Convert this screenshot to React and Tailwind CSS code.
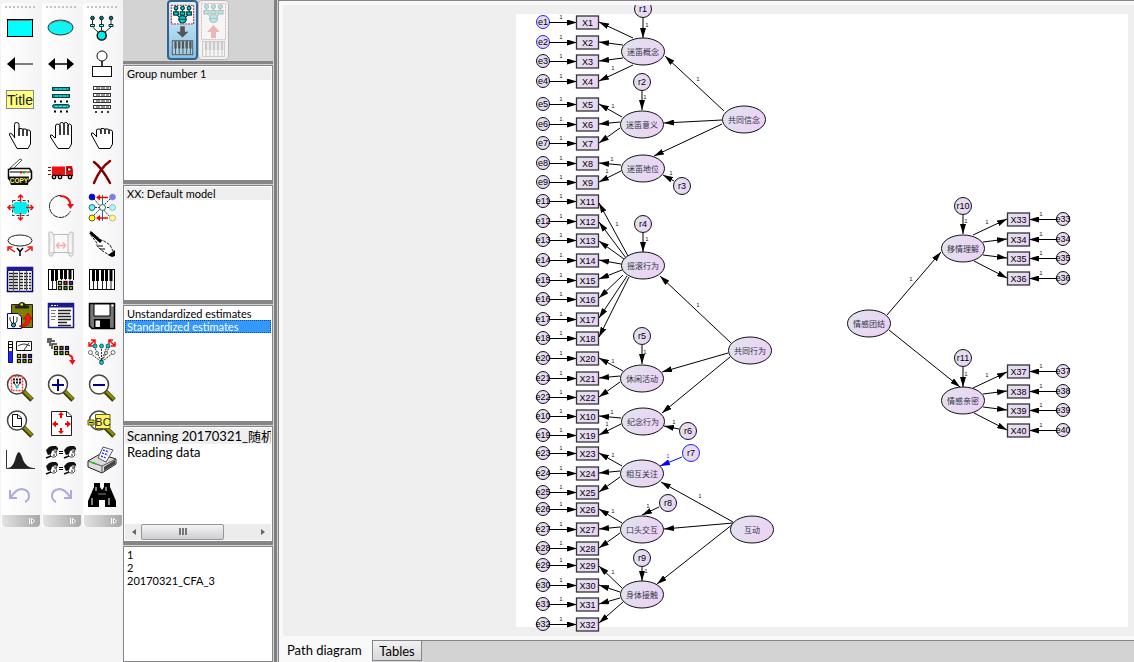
import {useState} from 'react';

const red = '#e11';

// one list per toolbar column, top to bottom, drawn on a 36x36 grid
const columnOne = [
    { name: 'Draw observed variable', art: <><rect x="5.5" y="9.5" width="25" height="17" fill="#0ff" stroke="#000" /><path d="M6 10.5H29" stroke="#777" /></> },
    { name: 'Draw path', art: <><path d="M5 18L13 11V25Z" /><path d="M12 18H31" stroke="#000" /></> },
    { name: 'Figure caption', art: <><rect x="4.5" y="8.5" width="27" height="18" fill="#ffff80" stroke="#888" /><text x="18" y="23" fontSize="14" textAnchor="middle" fontFamily="Liberation Sans, sans-serif" fill="#222">Title</text></> },
    { name: 'Select one object', art: <path d="M13 20L10 16Q7 14 7.500 17L12 25L15 30.500H26L28.500 26V14Q28.500 12 26.500 12H25V18V12Q25 11 23 11H21V18V12Q21 10.500 19 10.500H17V18V6.500Q17 4.500 14.500 4.500Q12.500 4.500 12.500 6.500V20" fill="#fff" stroke="#000" /> },
    { name: 'Duplicate objects', art: <><path d="M8 14L18 5L20 6L11 15" fill="#fff" stroke="#555" /><path d="M6.500 15.500L9.500 14.500H27.500L29.500 17.500V24.500L26.500 27.500H9.500L6.500 24.500Z" fill="#fff" stroke="#000" strokeWidth="1.500" /><path d="M8 18H29" stroke="#000" /><path d="M18 18.500H20" stroke="red" strokeWidth="2" /><path d="M21 18.500H23" stroke="#0b0" strokeWidth="2" /><path d="M24 18.500H26" stroke="#e90" strokeWidth="2" /><path d="M6 22.500H27L26 31H9Z" fill="#111" /><text x="17" y="29" fontSize="6.500" fontWeight="bold" textAnchor="middle" fontFamily="Liberation Sans, sans-serif" fill="#fff45a">COPY</text></> },
    { name: 'Change shape', art: <><path d="M10.500 10.500H26.500V25.500H10.500Z" fill="none" stroke="#333" strokeDasharray="3 2" /><path d="M13 12H24L28 17.500L24 24H13L9 17.500Z" fill="#0ee" /><g stroke={red} strokeWidth="1.500" fill="none"><path d="M18.500 5V12M16 7.500L18.500 5L21 7.500M18.500 23V30M16 27.500L18.500 30L21 27.500M6 17.500H13M8.500 15L6 17.500L8.500 20M24 17.500H31M28.500 15L31 17.500L28.500 20" /></g></> },
    { name: 'Move parameter values', art: <><ellipse cx="18" cy="14.500" rx="12" ry="5.500" fill="#fff" stroke="#222" /><path d="M15 22L18 25.500L21 22M18 25.500V30" fill="none" stroke="#000" strokeWidth="1.500" /><path d="M13 26L7 22M6 25V21H10.500M23 26L29 22M25.500 21H30V25" fill="none" stroke={red} strokeWidth="1.500" /></> },
    { name: 'Data files', art: <><rect x="5.500" y="5.500" width="25" height="24" fill="#fff" stroke="#000070" strokeWidth="1.500" /><rect x="5" y="5" width="26" height="4" fill="#1a1a9a" /><path d="M7 11.500H29M7 14.500H29M7 17.500H29M7 20.500H29M7 23.500H29M7 26.500H29" stroke="#222" strokeWidth="1.500" strokeDasharray="4 1" /><path d="M11.500 9V30M17.500 9V30M24.500 9V30" stroke="#555" /></> },
    { name: 'Copy to clipboard', art: <><path d="M9.500 6.500H30.500V29.500H9.500Z" fill="#808000" stroke="#222" /><path d="M13 10.500V7.500H16Q17 4 20 4T24 7.500H27V10.500Z" fill="#222" /><path d="M18.500 6.500H21" stroke="#ff0" strokeWidth="2" /><path d="M5.500 15.500H16L19.500 19V30.500H5.500Z" fill="#fff" stroke="#000080" /><path d="M8 19V22L11 27M11.500 18V26M15 19V23L12 27" fill="none" stroke="#333" /><circle cx="11.500" cy="27" r="2" fill="#0cc" stroke="#000" /><path d="M17 28Q24 27 24 21H21L26 15L30 21H28Q28 29 18 29Z" fill="#f11" stroke="#700" strokeWidth=".5" /></> },
    { name: 'Object properties', art: <><path d="M6.500 7.500H10.500V28.500H6.500Z" fill="#fff" stroke="#000" /><path d="M6.500 17H10.500V28H6.500Z" fill="#22f" /><path d="M6 10.500H10M6 13.500H10" stroke="#000" /><path d="M14.500 7.500H29.500V16.500H14.500Z" fill="#fff" stroke="#111" /><path d="M16 12Q22 8 28 12M22 16L27 9" fill="none" stroke="#333" /><Lamps x={14} y={19} /></> },
    { name: 'Zoom selected area', art: <><Glass /><path d="M9.500 6.500H20.500V20.500H9.500Z" fill="#fff" stroke="#f33" strokeWidth="1.500" strokeDasharray="2 1" /><path d="M11 9.500H19M11 12.500H19" stroke="#111" strokeWidth="2" strokeDasharray="2 1" /><path d="M12 13L15 17L18 13" fill="none" stroke="#333" /><circle cx="15" cy="17" r="1.500" fill="#0cc" /></> },
    { name: 'Zoom page', art: <><Glass /><path d="M10.500 8.500H16L19.500 12V20.500H10.500Z" fill="#fff" stroke="#111" /><path d="M15.500 9V12.500H19" fill="none" stroke="#111" /></> },
    { name: 'Bayesian', art: <><path d="M4.500 8V26.500H33" fill="none" stroke="#333" /><path d="M6 26Q11 25 13 18Q15 10 17 10Q19 11 21 18Q24 25 31 26Z" fill="#222" /></> },
    { name: 'Undo', art: <Turn /> },
];

const columnTwo = [
    { name: 'Draw unobserved variable', art: <><ellipse cx="17.500" cy="17.500" rx="12.500" ry="7.500" fill="#10f4f4" stroke="#333" /><path d="M7 14Q17 7 28 14" fill="none" stroke="#666" /></> },
    { name: 'Draw covariance', art: <><path d="M5 18L12 12V24ZM31 18L24 12V24Z" /><path d="M11 18H25" stroke="#000" strokeWidth="1.500" /></> },
    { name: 'List variables in model', art: <><g fill="#099" stroke="#044"><rect x="9.500" y="5.500" width="17" height="3" /><rect x="9.500" y="12.500" width="17" height="3" /><rect x="9.500" y="22.500" width="17" height="3.500" rx="2" /></g><path d="M12 7H25M12 14H25M12 24.500H25" stroke="#6dd" strokeDasharray="3 1" /><path d="M11 19.500H26M11 29.500H26" stroke="#000" strokeWidth="2" strokeDasharray="2 4" /></> },
    { name: 'Select all objects', art: <path d="M12 20L9 17Q7 16 7.500 19L12 26L15 30.500H26L28.500 26V8Q28 6 26.500 6Q25 6 25 8V17V6Q24.500 4.500 22.500 4.500Q21 4.500 21 6V17V6Q20.500 4.500 18.500 4.500Q17 4.500 17 6V17V8Q16 6 14.500 6Q12.500 6 12.500 8V20" fill="#fff" stroke="#000" /> },
    { name: 'Move objects', art: <><path d="M9 12.500H22V21H9ZM23 12H29L30 16V21H23Z" fill="#e11" /><path d="M5 13.500H8M5 16.500H8M5 20.500H8" stroke="#a00" /><path d="M24.500 14H28V17H24.500Z" fill="#fff" stroke="#500" /><path d="M9 21.500H30" stroke="#300" /><g fill="#fff" stroke="#000" strokeWidth="1.500"><circle cx="11" cy="23" r="1.700" /><circle cx="17" cy="23" r="1.700" /><circle cx="27" cy="23" r="1.700" /></g></> },
    { name: 'Rotate', art: <><path d="M18 5.500A11 11 0 1 0 27.500 21" fill="none" stroke="#222" strokeDasharray="6 .6" /><path d="M17 6Q27 6 27.500 16" fill="none" stroke={red} strokeWidth="2" /><path d="M24 14H31L27.500 19Z" fill={red} /></> },
    { name: 'Scroll page', art: <><path d="M10 8.500H26M10 26.500H26" stroke="#bbb" /><path d="M10 8Q9 5 6.500 6Q5 7 6 10V27Q6 31 9 30L11 27H7M11 27V8M26 8Q27 5 29.500 6Q31 7 30 10V27Q30 31 27 30L25 27H29M25 27V8" fill="#eee" stroke="#bbb" /><path d="M13.500 19.500H22.500M16 16.500L13.500 19.500L16 22.500M20 16.500L22.500 19.500L20 22.500" fill="none" stroke="#faa" strokeWidth="1.500" /></> },
    { name: 'Analysis properties', art: <><Keys half /><Lamps x={14} y={18} /></> },
    { name: 'View text', art: <><rect x="5.500" y="5.500" width="25" height="24" fill="#fff" stroke="#1a1a8a" strokeWidth="1.500" /><path d="M5 7.500H31" stroke="#1a1a8a" strokeWidth="4" /><path d="M8 7.500H15" stroke="#fff" strokeDasharray="2 1" /><path d="M8 12.500H13M8 15.500H12M8 18.500H13M8 21.500H12" stroke="#777" /><path d="M15 12.500H28M15 15.500H27M15 18.500H28M15 21.500H28M15 24.500H24M15 27.500H28" stroke="#222" strokeWidth="1.500" /></> },
    { name: 'Drag properties', art: <><path d="M5 9V5H9M7 12V7H12M9 15V10H14" fill="none" stroke="#333" strokeWidth="1.500" /><Lamps x={10} y={11} /><path d="M26 21Q30 22 29.500 27" fill="none" stroke={red} strokeWidth="2" /><path d="M26 26H32.500L29.500 31Z" fill={red} /></> },
    { name: 'Zoom in', art: <><Glass /><path d="M15 9V21M9 15H21" stroke="#00008b" strokeWidth="2" /></> },
    { name: 'Resize to page', art: <><path d="M8.500 5.500H24L28.500 10V29.500H8.500Z" fill="#fff" stroke="#222" /><path d="M23.500 6V10.500H28" fill="none" stroke="#222" /><path d="M18 6L21 9H19V12H17V9H15ZM18 28L21 25H19V22H17V25H15ZM9 18L13 14.500V17H15V19H13V21.500ZM28 18L24 14.500V17H22V19H24V21.500Z" fill="red" /></> },
    { name: 'Multiple group analysis', art: <><Heads y={4} /><Heads y={20} /></> },
    { name: 'Redo', art: <g transform="translate(36 0) scale(-1 1)"><Turn /></g> },
];

const columnThree = [
    { name: 'Draw indicator', art: <><path d="M8.500 8V17L14 22M17.500 8V20M27 8V17L21 22" fill="none" stroke="#333" /><g fill="#087878" stroke="#022"><circle cx="8.500" cy="8" r="1.800" /><circle cx="17.500" cy="8" r="1.800" /><circle cx="27" cy="8" r="1.800" /></g><path d="M6.500 14.500H10.500V16.500H6.500ZM15.500 14.500H19.500V16.500H15.500ZM25 14.500H29V16.500H25Z" fill="#6ff" stroke="#033" /><circle cx="17.700" cy="25.500" r="4.500" fill="#0ee" stroke="#111" strokeWidth="1.500" /></> },
    { name: 'Add unique variable', art: <><circle cx="18" cy="10" r="5" fill="#fff" stroke="#111" /><path d="M18 15V21" stroke="#000" strokeWidth="1.500" /><rect x="8.500" y="20.500" width="19" height="10" fill="#fff" stroke="#111" /></> },
    { name: 'List variables in data set', art: <><g fill="#fff" stroke="#333"><rect x="9.500" y="4.500" width="17" height="3" /><rect x="9.500" y="11.500" width="17" height="3" /><rect x="9.500" y="17.500" width="17" height="3" /><rect x="9.500" y="23.500" width="17" height="3" /></g><path d="M12 6H25M12 13H25M12 19H25M12 25H25" stroke="#333" strokeDasharray="4 1" /><path d="M11 30H26" stroke="#000" strokeWidth="1.500" strokeDasharray="2 4" /></> },
    { name: 'Deselect all objects', art: <path d="M13 19L9 15Q7 14 7.500 17L12 25L15 30.500H26L28.500 26V14Q28.500 12 26.500 12H25V16V12Q25 11 23 11H21V16V12Q21 10.500 19 10.500H17V16V12Q16 11 14.500 11Q12 11 12.500 13V18" fill="#fff" stroke="#000" /> },
    { name: 'Erase objects', art: <><path d="M10 8Q18 14 26 29M26 7Q16 14 10 29" fill="none" stroke="#8b0000" strokeWidth="2.500" strokeLinecap="round" /><path d="M11 8Q18 14 26 28" fill="none" stroke="#400" strokeWidth=".7" /></> },
    { name: 'Reflect indicators', art: <><path d="M8 17.500H28M10 25L17 18L26 9M10 9L26 27" fill="none" stroke="#333" strokeDasharray="2 1" /><path d="M18.500 5V31" stroke="#088" /><g stroke="#222" strokeWidth=".7"><circle cx="8" cy="7" r="3" fill="#00f" /><circle cx="8" cy="17.500" r="3" fill="#5ff" /><circle cx="8" cy="28" r="3" fill="#ff0" /><circle cx="18.500" cy="17.500" r="3" fill="#dff" /></g><g stroke="#999" strokeWidth=".7"><circle cx="28.500" cy="7" r="3" fill="#77f" /><circle cx="28.500" cy="17.500" r="3" fill="#9ff" /><circle cx="28.500" cy="28" r="3" fill="#ff7" /></g><path d="M24 7.500H15M24 28H15" stroke="red" strokeWidth="1.500" /><path d="M12 7.500L16 4.500V10.500ZM12 28L16 25V31Z" fill="red" /></> },
    { name: 'Touch up', art: <><path d="M6.500 5.500L17 14L20 15L26 19L28 23L30 27L25 29L17 24L13 20V17L6 8Z" fill="#fff" stroke="#222" strokeDasharray="3 1" /><path d="M6.500 6.500L17 16" stroke="#000" strokeWidth="3" /><path d="M14 20L19 20M16 23L21 23" stroke="#000" /><path d="M24 29L31 24V30L28 31Z" fill="#000" /></> },
    { name: 'Calculate estimates', art: <Keys /> },
    { name: 'Save diagram', art: <><path d="M5.500 5.500H30.500V30.500H8L5.500 28Z" fill="#777" stroke="#000" strokeWidth="1.500" /><path d="M10 6H26V18H10Z" fill="#fff" stroke="#000" /><path d="M10 21H26V30H10Z" fill="#000" /><path d="M11.500 22.500H16V29H11.500Z" fill="#eee" /><path d="M27.500 7.500H29.500" stroke="#fff" strokeWidth="2" /></> },
    { name: 'Preserve symmetries', art: <><path d="M10 12L17.500 28L23 12M17.500 12V28M6 19L17.500 28L29 19M26 12L17.500 28" fill="none" stroke="#333" strokeDasharray="2 1" /><g fill="#0cc" stroke="#033" strokeWidth=".7"><circle cx="11" cy="12" r="2" /><circle cx="17.500" cy="12" r="2" /><circle cx="24" cy="12" r="2" /><circle cx="17.500" cy="28.500" r="2" /></g><g fill="#fff" stroke="#333" strokeWidth=".7"><circle cx="6.500" cy="18.500" r="2" /><circle cx="29" cy="18.500" r="2" /><circle cx="13" cy="19" r="1.500" /><circle cx="22" cy="19" r="1.500" /></g><path d="M5 12L11 6M5 8V12H9M7 6H11V10M31 12L25 6M31 8V12H27M29 6H25V10" fill="none" stroke={red} strokeWidth="1.500" /></> },
    { name: 'Zoom out', art: <><Glass /><path d="M9 15H21" stroke="#00008b" strokeWidth="2" /></> },
    { name: 'Loupe', art: <><Glass /><path d="M4 14H10V19H4Z" fill="#cc3" stroke="#660" /><path d="M5 16.500H9" stroke="#222" /><path d="M11.500 8.500H26V22.500H11.500Z" fill="#fff36a" stroke="#660" /><text x="19" y="20" fontSize="11" textAnchor="middle" fontFamily="Liberation Sans, sans-serif" fill="#222">BC</text></> },
    { name: 'Print', art: <><path d="M4 19L16 12L32 17V22L18 31L4 25Z" fill="#ddd" stroke="#222" /><path d="M4 19L18 24L32 17M18 24V31" fill="none" stroke="#555" /><path d="M20 25L31 18V22L20 29Z" fill="#444" /><path d="M14 16L19 5L29 8L22 20Z" fill="#fff" stroke="#555" /><path d="M19 8L25 10M18 11L24 13M17 14L22 16" stroke="#33f" strokeWidth="1.500" strokeDasharray="2 1" /><path d="M8 20.500L12 22" stroke="#0c0" strokeWidth="1.500" /></> },
    { name: 'Specification search', art: <><path d="M10 5H16V9L18 12L20 9V5H26V9L32 23V29H21V22H15V29H4V23L10 9Z" fill="#000" /><path d="M8 20V27M25 20V27M12 9V13M22 9V13" stroke="#fff" /><path d="M14 16H22" stroke="#888" /></> },
];

function Glass() {
    return (
        <>
            <path d="M21 21L30 30" stroke="#3b3b00" strokeWidth="5" />
            <path d="M21 20L30 29" stroke="#8a8a10" strokeWidth="3" />
            <circle cx="15" cy="14.500" r="9.500" fill="#fff" stroke="#444" strokeWidth="1.500" />
        </>
    );
}

function Turn() {
    return <path d="M8 12V20H15M9 19Q14 11 20 11Q27 12 27 18Q27 22 23 24" fill="none" stroke="#aaaadc" strokeWidth="2" />;
}

function Keys({ half }) {
    return (
        <>
            <rect x="5.500" y="7.500" width="25" height="20" fill="#fff" stroke="#000" />
            <path d="M9.500 8V27M13.500 8V27M18.500 8V27M22.500 8V27M27 8V27" stroke="#222" />
            <path d={half ? 'M9.500 8V19M13.500 8V19M18.500 8V17M22.500 8V17M27 8V17' : 'M9.500 8V19M13.500 8V19M18.500 8V19M22.500 8V19M27 8V19'} stroke="#000" strokeWidth="3" />
        </>
    );
}

function Lamps({ x, y }) {
    const colors = ['#ff0', '#f22', '#33f', '#ee0', '#2c2', '#dd0'];
    return (
        <>
            <rect x={x} y={y} width="17" height="11" fill="#fff" />
            {colors.map((color, i) => (
                <rect key={i} x={x + 1.5 + (i % 3) * 5.5} y={y + 1.5 + Math.floor(i / 3) * 5} width="3" height="3" fill={color} stroke="#111" strokeWidth="1.300" />
            ))}
        </>
    );
}

function Heads({ y }) {
    return (
        <>
            {[3, 21].map((x) => (
                <g key={x} transform={`translate(${x} ${y})`}>
                    <path d="M5 4H11L10 7L11 9L9 11H6L4 9Z" fill="#fff" stroke="#222" strokeWidth=".8" />
                    <path d="M0 4L3 1L6 0H10L12 2V4L9 3L6 5L5 8L2 9L1 7Z" fill="#111" />
                    <path d="M8 6H10M7 9L9 9" stroke="#111" />
                    <path d="M0 12L5 10" stroke="#111" strokeWidth="1.500" />
                </g>
            ))}
            <path d={`M16 ${y + 5.5}H20M16 ${y + 7.5}H20`} stroke="#000" />
        </>
    );
}

function ToolColumn({ tools }) {
    return (
        <div className="flex w-[39px] flex-col items-start rounded-t bg-linear-to-r from-white to-[#f4f4f6] pl-px">
            <div className="mt-[3px] mb-[2px] ml-[3px] h-[2px] w-[30px] border-t-2 border-dotted border-[#c4c4c4]" />
            {tools.map((tool) => (
                <button key={tool.name} aria-label={tool.name} className="h-9 w-9">
                    <svg width="36" height="36" viewBox="0 0 36 36" aria-hidden="true">{tool.art}</svg>
                </button>
            ))}
            <div className="mt-px flex h-3 w-full items-center justify-end rounded-b bg-linear-to-r from-[#e2e2e2] to-[#a8a8a8] pr-1">
                <svg width="8" height="8" viewBox="0 0 8 8" aria-hidden="true">
                    <path d="M1.500 1V7M3.500 1.500L6.500 4L3.500 6.500Z" fill="#999" stroke="#fff" />
                </svg>
            </div>
        </div>
    );
}

function ModeArt({ up }) {
    return (
        <svg width="29" height="56" viewBox="0 0 29 56" opacity={up ? 0.25 : 1} aria-hidden="true">
            <path d={up ? 'M2.500 1.500H26.500V37.500H2.500Z' : 'M2.500 1.500H26.500V21.500H2.500Z'} fill="#fff" stroke="#a11" strokeDasharray="2 1" />
            <path d="M7.500 4V11L14 17M14.500 4V16M21.500 4V11L15 17" fill="none" stroke="#111" />
            <g fill="#0cc" stroke="#033" strokeWidth="1.200">
                <circle cx="7.500" cy="4.500" r="2" /><circle cx="14.500" cy="4.500" r="2" /><circle cx="21.500" cy="4.500" r="2" />
                <rect x="5" y="8.500" width="5" height="3.500" /><rect x="12" y="8.500" width="5" height="3.500" /><rect x="19" y="8.500" width="5" height="3.500" />
                <circle cx="14.500" cy="16.500" r="4" />
            </g>
            <path d="M11 16.500H18" stroke="#033" />
            {up
                ? <path d="M12 36V30H8L14.500 23L21 30H17V36Z" fill="#c11" />
                : <path d="M12 24V30H8L14.500 36L21 30H17V24Z" fill="#555" />}
            <rect x="3.500" y="39.500" width="22" height="15" fill={up ? '#fff' : '#a9cfe6'} stroke="#555" />
            <path d="M7 40V54M11 40V54M15 40V54M19 40V54M23 40V54" stroke="#555" />
            <path d="M7 40V48M11 40V48M15 40V48M19 40V48M23 40V48" stroke="#555" strokeWidth="2.500" />
        </svg>
    );
}

function Pane({ children }) {
    return (
        <section className="flex min-h-0 flex-1 flex-col border-t-[3px] border-[#868686] bg-[#d3d3d3] pt-px">
            <div className="flex min-h-0 flex-1 flex-col border border-[#85858d] bg-white p-px">{children}</div>
        </section>
    );
}

function PaneList({ items, selected, shaded, large, onSelect }) {
    return (
        <ul className="flex-1 overflow-hidden">
            {items.map((item) => (
                <li key={item}>
                    <button
                        className={`block w-full overflow-hidden px-[2px] text-left whitespace-nowrap ${large ? 'h-4 text-[13px] leading-4' : 'h-[13px] text-[11px] leading-[13px]'} ${item === selected ? 'bg-[#3399ff] text-white outline-1 -outline-offset-1 outline-dotted outline-[#124b80]' : item === shaded ? 'bg-[#efefef]' : ''}`}
                        onClick={() => onSelect && onSelect(item)}>
                        {item}
                    </button>
                </li>
            ))}
        </ul>
    );
}

// [number, y] of every measured item
const leftItems = [
    [1, 22], [2, 42], [3, 61], [4, 81], [5, 104], [6, 124], [7, 143], [8, 163], [9, 182],
    [11, 201], [12, 221], [13, 240], [14, 260], [15, 280], [16, 299], [17, 319], [18, 338],
    [20, 358], [21, 378], [22, 397], [10, 416], [19, 435], [23, 453], [24, 473], [25, 492],
    [26, 509], [27, 529], [28, 548], [29, 565], [30, 585], [31, 604], [32, 624],
];
const rightItems = [[33, 219], [34, 239], [35, 258], [36, 278], [37, 371], [38, 391], [39, 410], [40, 430]];

const factors = [
    ['迷笛概念', 643, 51], ['迷笛意义', 642, 124], ['迷笛地位', 643, 168], ['摇滚行为', 643, 265],
    ['休闲活动', 642, 378], ['纪念行为', 643, 421], ['相互关注', 642, 473], ['口头交互', 642, 529],
    ['身体接触', 642, 594], ['共同信念', 744, 119], ['共同行为', 750, 350], ['互动', 752, 529],
    ['情感团结', 869, 323], ['移情理解', 963, 248], ['情感亲密', 963, 400],
];

const residuals = [
    [1, 643, 9], [2, 642, 82], [3, 682, 186], [4, 643, 224], [5, 642, 336], [6, 688, 431],
    [7, 691, 453], [8, 668, 503], [9, 642, 558], [10, 963, 206], [11, 963, 358],
];

const paths = [
    [633, 38, 599, 22], [623, 45, 599, 42], [623, 58, 599, 61], [633, 65, 599, 81],
    [622, 117, 599, 104], [620, 122, 599, 124], [620, 128, 599, 143],
    [621, 165, 599, 163], [621, 171, 599, 182],
    [628, 256, 599, 203], [626, 258, 599, 222], [624, 259, 599, 241], [621, 264, 599, 260],
    [622, 270, 599, 279], [623, 275, 599, 298], [627, 276, 599, 318], [629, 277, 599, 337],
    [623, 371, 599, 358], [620, 376, 599, 378], [620, 382, 599, 397],
    [621, 418, 599, 416], [621, 424, 599, 435],
    [622, 466, 599, 453], [620, 471, 599, 473], [620, 477, 599, 492],
    [622, 523, 599, 509], [620, 527, 599, 529], [620, 533, 599, 548],
    [622, 588, 599, 566], [620, 592, 599, 585], [620, 598, 599, 604], [623, 602, 599, 623],
    [724, 111, 665, 56], [722, 120, 664, 123], [722, 124, 654, 156],
    [731, 343, 660, 276], [728, 353, 662, 372], [730, 357, 662, 413],
    [733, 522, 661, 482], [733, 523, 664, 529], [733, 524, 657, 584],
    [643, 18, 643, 38], [642, 91, 642, 110], [674, 181, 663, 175], [643, 233, 643, 252],
    [642, 345, 642, 364], [679, 429, 664, 426], [659, 507, 642, 515], [642, 567, 642, 581],
    [963, 215, 963, 234], [963, 367, 963, 387],
    [887, 315, 941, 252], [889, 330, 960, 387],
    [973, 235, 1007, 219], [983, 242, 1007, 239], [983, 255, 1007, 258], [974, 261, 1007, 278],
    [973, 388, 1007, 372], [983, 394, 1007, 391], [983, 407, 1007, 410], [974, 413, 1007, 430],
];

const weights = [
    [613, 68], [613, 106], [612, 159], [607, 171], [617, 224], [613, 361], [612, 412], [607, 424],
    [613, 455], [613, 511], [613, 572], [698, 79], [698, 305], [700, 496], [647, 25], [645, 97],
    [671, 173], [647, 239], [645, 352], [674, 422], [648, 506], [646, 571], [966, 221], [966, 374],
    [911, 279], [987, 222], [987, 375],
];

function Weight({ x, y }) {
    return <text x={x} y={y + 2} fontSize="6" fill="#223">1</text>;
}

function ItemRow({ number, y, right }) {
    const boxX = right ? 1018 : 587;
    const errorX = right ? 1063 : 543;
    const chosen = number < 3;
    return (
        <g>
            <circle cx={errorX} cy={y} r="6.500" fill="url(#node)" stroke={chosen ? '#22e' : '#111'} />
            <path d={right ? `M1057 ${y + 0.5}H1029` : `M549 ${y + 0.5}H577`} stroke="#000" markerEnd="url(#head)" />
            <rect x={boxX - 10.5} y={y - 6} width="22" height="13" fill="url(#node)" stroke="#333" strokeWidth="1.300" />
            <text x={errorX} y={y + 3}>e{number}</text>
            <text x={boxX + 0.5} y={y + 4}>X{number}</text>
            <Weight x={right ? 1041 : 561} y={y - 5} />
        </g>
    );
}

function Diagram() {
    return (
        <svg className="shrink-0" width="851" height="631" viewBox="283 5 851 631" role="img" aria-label="Path diagram"
            fontFamily="'Liberation Sans', 'Noto Sans CJK SC', sans-serif" fontSize="9" textAnchor="middle">
            <defs>
                <linearGradient id="node" x1="0" y1="0" x2="1" y2="0.3">
                    <stop offset="0" stopColor="#e0e4ee" />
                    <stop offset="1" stopColor="#ecd3f5" />
                </linearGradient>
                <marker id="head" markerUnits="userSpaceOnUse" markerWidth="10" markerHeight="6" refX="10" refY="3" orient="auto">
                    <path d="M0 0L10 3L0 6Z" />
                </marker>
                <marker id="headBlue" markerUnits="userSpaceOnUse" markerWidth="10" markerHeight="6" refX="10" refY="3" orient="auto">
                    <path d="M0 0L10 3L0 6Z" fill="#00f" />
                </marker>
            </defs>
            <rect x="516" y="14" width="612" height="613" fill="#fff" />
            {leftItems.map(([number, y]) => <ItemRow key={number} number={number} y={y} />)}
            {rightItems.map(([number, y]) => <ItemRow key={number} number={number} y={y} right />)}
            {paths.map(([x1, y1, x2, y2], i) => (
                <line key={i} x1={x1} y1={y1} x2={x2} y2={y2} stroke="#000" markerEnd="url(#head)" />
            ))}
            <line x1="682" y1="457" x2="660" y2="466" stroke="#00f" markerEnd="url(#headBlue)" />
            {factors.map(([label, x, y]) => (
                <g key={label}>
                    <ellipse cx={x} cy={y + 0.5} rx="21.500" ry="13.500" fill="url(#node)" stroke="#111" />
                    <text x={x} y={y + 4} fontSize="8" fill="#334">{label}</text>
                </g>
            ))}
            {residuals.map(([number, x, y]) => (
                <g key={number}>
                    <circle cx={x} cy={y} r="8.500" fill="url(#node)" stroke={number === 7 ? '#22e' : '#111'} />
                    <text x={x} y={y + 3}>r{number}</text>
                </g>
            ))}
            {weights.map(([x, y]) => <Weight key={`${x}-${y}`} x={x} y={y} />)}
            <text x="668" y="458" fontSize="6" fill="#83f">1</text>
        </svg>
    );
}

export default function App() {

    const [estimate, setEstimate] = useState('Standardized estimates');

    return (
        <div className="flex h-screen overflow-hidden bg-[#f4f4f4] font-[Lato,'Noto_Sans_CJK_SC',sans-serif] text-black">
            <nav aria-label="Tools" className="flex w-[123px] shrink-0 items-start gap-[2px] pt-[3px] pl-px">
                <ToolColumn tools={columnOne} />
                <ToolColumn tools={columnTwo} />
                <ToolColumn tools={columnThree} />
            </nav>

            <aside className="flex w-[150px] shrink-0 flex-col">
                <div className="flex h-[61px] shrink-0 justify-center bg-[#d3d3d3]">
                    <button aria-label="View input diagram" className="flex h-[60px] w-[31px] items-center justify-center rounded border-2 border-[#33638a] bg-linear-to-b from-[#dcf0fc] to-[#86c2e8]">
                        <ModeArt />
                    </button>
                    <button aria-label="View output diagram" className="flex h-[60px] w-[31px] items-center justify-center rounded border border-[#b8b8b8] bg-[#f2f2f2]">
                        <ModeArt up />
                    </button>
                </div>
                <Pane><PaneList items={['Group number 1']} shaded="Group number 1" /></Pane>
                <Pane><PaneList items={['XX: Default model']} shaded="XX: Default model" /></Pane>
                <Pane><PaneList items={['Unstandardized estimates', 'Standardized estimates']} selected={estimate} onSelect={setEstimate} /></Pane>
                <Pane>
                    <PaneList large items={['Scanning 20170321_随机7', 'Reading data']} shaded="Scanning 20170321_随机7" />
                    <div className="flex h-4 items-stretch justify-between bg-[#ececec]">
                        <button aria-label="Scroll left" className="flex w-4 items-center justify-center">
                            <svg width="5" height="8" viewBox="0 0 5 8" aria-hidden="true"><path d="M5 1V7L1 4Z" fill="#666" /></svg>
                        </button>
                        <div className="mr-auto flex w-[83px] items-center justify-center gap-px rounded-xs border border-[#979797] bg-linear-to-b from-[#f4f4f4] to-[#cfcfd2]">
                            <span className="h-[7px] w-[2px] bg-[#777]" />
                            <span className="h-[7px] w-[2px] bg-[#777]" />
                            <span className="h-[7px] w-[2px] bg-[#777]" />
                        </div>
                        <button aria-label="Scroll right" className="flex w-4 items-center justify-center">
                            <svg width="5" height="8" viewBox="0 0 5 8" aria-hidden="true"><path d="M0 1V7L4 4Z" fill="#666" /></svg>
                        </button>
                    </div>
                </Pane>
                <Pane><PaneList items={['1', '2', '20170321_CFA_3']} /></Pane>
            </aside>

            <div className="w-[5px] shrink-0 border-x border-[#d3d3d3] bg-[#808080]" />

            <main className="flex min-w-0 flex-1 flex-col border-t border-l border-[#85858d] bg-[#f9f9f9]">
                <div className="mt-1 mb-1 ml-1 flex min-h-0 flex-1 overflow-hidden bg-[#efefef]">
                    <Diagram />
                </div>
                <div className="flex h-[22px] shrink-0 text-[13px]">
                    <button className="w-[93px] px-2 text-left whitespace-nowrap">Path diagram</button>
                    <div className="flex flex-1 border-t border-[#85858d] bg-[#d3d3d3]">
                        <button className="h-5 w-[50px] border border-t-0 border-[#85858d] bg-linear-to-b from-[#f2f2f2] to-[#d8d8d8] leading-5">Tables</button>
                    </div>
                </div>
            </main>
        </div>
    );
}
